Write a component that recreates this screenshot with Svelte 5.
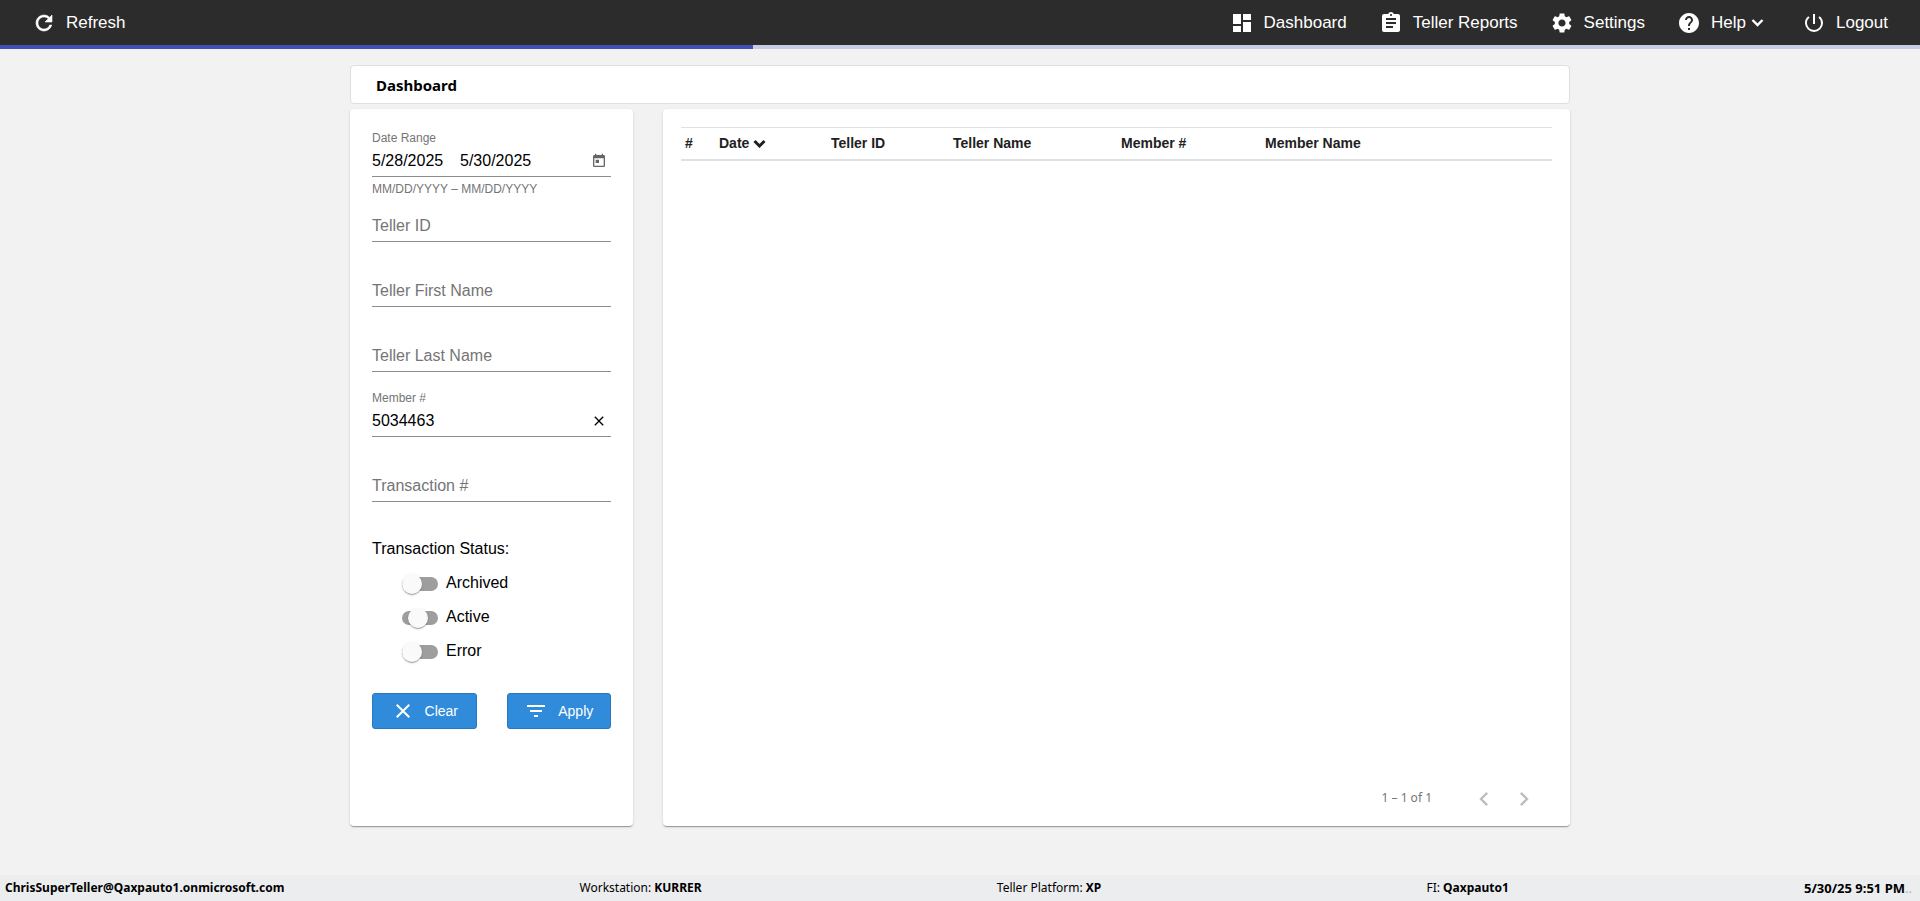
<script lang="ts">
	interface StatusItem {
		label: string;
		checked: boolean;
		indeterminate: boolean;
	}

	// Material icon outlines, drawn on a 24x24 grid
	const icons = {
		refresh:
			'M17.65 6.35A7.958 7.958 0 0 0 12 4c-4.42 0-7.99 3.58-7.99 8s3.57 8 7.99 8c3.73 0 6.84-2.55 7.73-6h-2.08A5.99 5.99 0 0 1 12 18c-3.31 0-6-2.69-6-6s2.69-6 6-6c1.66 0 3.14.69 4.22 1.78L13 11h7V4l-2.35 2.35z',
		dashboard: 'M3 13h8V3H3v10zm0 8h8v-6H3v6zm10 0h8V11h-8v10zm0-18v6h8V3h-8z',
		reports:
			'M19 3h-4.18C14.4 1.84 13.3 1 12 1s-2.4.84-2.82 2H5c-1.1 0-2 .9-2 2v14c0 1.1.9 2 2 2h14c1.1 0 2-.9 2-2V5c0-1.1-.9-2-2-2zm-7 0c.55 0 1 .45 1 1s-.45 1-1 1-1-.45-1-1 .45-1 1-1zm2 14H7v-2h7v2zm3-4H7v-2h10v2zm0-4H7V7h10v2z',
		settings:
			'M19.14 12.94c.04-.3.06-.61.06-.94 0-.32-.02-.64-.07-.94l2.03-1.58c.18-.14.23-.41.12-.61l-1.92-3.32c-.12-.22-.37-.29-.59-.22l-2.39.96c-.5-.38-1.03-.7-1.62-.94l-.36-2.54c-.04-.24-.24-.41-.48-.41h-3.84c-.24 0-.43.17-.47.41l-.36 2.54c-.59.24-1.13.57-1.62.94l-2.39-.96c-.22-.08-.47 0-.59.22L2.74 8.87c-.12.21-.08.47.12.61l2.03 1.58c-.05.3-.09.63-.09.94s.02.64.07.94l-2.03 1.58c-.18.14-.23.41-.12.61l1.92 3.32c.12.22.37.29.59.22l2.39-.96c.5.38 1.03.7 1.62.94l.36 2.54c.05.24.24.41.48.41h3.84c.24 0 .44-.17.47-.41l.36-2.54c.59-.24 1.13-.56 1.62-.94l2.39.96c.22.08.47 0 .59-.22l1.92-3.32c.12-.22.07-.47-.12-.61l-2.01-1.58zM12 15.6c-1.98 0-3.6-1.62-3.6-3.6s1.62-3.6 3.6-3.6 3.6 1.62 3.6 3.6-1.62 3.6-3.6 3.6z',
		help: 'M12 2C6.48 2 2 6.48 2 12s4.48 10 10 10 10-4.48 10-10S17.52 2 12 2zm1 17h-2v-2h2v2zm2.07-7.75l-.9.92C13.45 12.9 13 13.5 13 15h-2v-.5c0-1.1.45-2.1 1.17-2.83l1.24-1.26c.37-.36.59-.86.59-1.41 0-1.1-.9-2-2-2s-2 .9-2 2H8c0-2.21 1.79-4 4-4s4 1.79 4 4c0 .88-.36 1.68-.93 2.25z',
		logout:
			'M13 3h-2v10h2V3zm4.83 2.17l-1.42 1.42A6.92 6.92 0 0 1 19 12c0 3.87-3.13 7-7 7A6.995 6.995 0 0 1 7.58 6.58L6.17 5.17A8.932 8.932 0 0 0 3 12a9 9 0 0 0 18 0c0-2.74-1.23-5.18-3.17-6.83z',
		today:
			'M19 3h-1V1h-2v2H8V1H6v2H5c-1.11 0-1.99.9-1.99 2L3 19c0 1.1.89 2 2 2h14c1.1 0 2-.9 2-2V5c0-1.1-.9-2-2-2zm0 16H5V8h14v11zM7 10h5v5H7z',
		close:
			'M19 6.41L17.59 5 12 10.59 6.41 5 5 6.41 10.59 12 5 17.59 6.41 19 12 13.41 17.59 19 19 17.59 13.41 12z',
		filter: 'M10 18h4v-2h-4v2zM3 6v2h18V6H3zm3 7h12v-2H6v2z',
		left: 'M15.41 7.41L14 6l-6 6 6 6 1.41-1.41L10.83 12z',
		right: 'M10 6L8.59 7.41 13.17 12l-4.58 4.59L10 18l6-6z'
	};

	const columns = ['#', 'Date', 'Teller ID', 'Teller Name', 'Member #', 'Member Name'];

	let startDate = $state('5/28/2025');
	let endDate = $state('5/30/2025');
	let tellerId = $state('');
	let firstName = $state('');
	let lastName = $state('');
	let member = $state('5034463');
	let transaction = $state('');

	let statuses = $state<StatusItem[]>([
		{ label: 'Archived', checked: false, indeterminate: false },
		{ label: 'Active', checked: false, indeterminate: true },
		{ label: 'Error', checked: false, indeterminate: false }
	]);

	function clearFilters() {
		tellerId = '';
		firstName = '';
		lastName = '';
		member = '';
		transaction = '';
	}
</script>

{#snippet icon(name: keyof typeof icons)}
	<svg class="icon {name}" viewBox="0 0 24 24" aria-hidden="true"><path d={icons[name]} /></svg>
{/snippet}

{#snippet caret()}
	<svg class="caret" viewBox="0 0 13 9" aria-hidden="true"><path d="M1.5 2l5 5 5-5" /></svg>
{/snippet}

<div class="app">
	<header class="toolbar">
		<button class="nav-item" type="button">{@render icon('refresh')}Refresh</button>
		<nav class="nav">
			<a class="nav-item" href="#dashboard">{@render icon('dashboard')}Dashboard</a>
			<a class="nav-item" href="#reports">{@render icon('reports')}Teller Reports</a>
			<a class="nav-item" href="#settings">{@render icon('settings')}Settings</a>
			<button class="nav-item" type="button">
				{@render icon('help')}
				<span class="with-caret">Help {@render caret()}</span>
			</button>
			<a class="nav-item" href="#logout">{@render icon('logout')}Logout</a>
		</nav>
	</header>
	<div class="progress"><div class="progress-bar"></div></div>

	<main class="content">
		<h1 class="title">Dashboard</h1>

		<div class="panels">
			<form class="card filters" onsubmit={(e) => e.preventDefault()}>
				<div class="field">
					<label for="start-date">Date Range</label>
					<div class="control">
						<input id="start-date" class="date" bind:value={startDate} />
						<input class="date" aria-label="End date" bind:value={endDate} />
						<button class="suffix calendar" type="button" aria-label="Open calendar">
							{@render icon('today')}
						</button>
					</div>
					<span class="hint">MM/DD/YYYY – MM/DD/YYYY</span>
				</div>
				<div class="field">
					<div class="control">
						<input aria-label="Teller ID" placeholder="Teller ID" bind:value={tellerId} />
					</div>
				</div>
				<div class="field">
					<div class="control">
						<input
							aria-label="Teller First Name"
							placeholder="Teller First Name"
							bind:value={firstName}
						/>
					</div>
				</div>
				<div class="field">
					<div class="control">
						<input
							aria-label="Teller Last Name"
							placeholder="Teller Last Name"
							bind:value={lastName}
						/>
					</div>
				</div>
				<div class="field">
					<label for="member">Member #</label>
					<div class="control">
						<input id="member" bind:value={member} />
						<button
							class="suffix"
							type="button"
							aria-label="Clear member"
							onclick={() => (member = '')}
						>
							{@render icon('close')}
						</button>
					</div>
				</div>
				<div class="field">
					<div class="control">
						<input aria-label="Transaction #" placeholder="Transaction #" bind:value={transaction} />
					</div>
				</div>

				<fieldset class="statuses">
					<legend>Transaction Status:</legend>
					{#each statuses as status (status.label)}
						<label class="toggle">
							<input
								type="checkbox"
								bind:checked={status.checked}
								bind:indeterminate={status.indeterminate}
							/>
							{status.label}
						</label>
					{/each}
				</fieldset>

				<div class="actions">
					<button class="btn" type="button" onclick={clearFilters}>
						{@render icon('close')}Clear
					</button>
					<button class="btn" type="submit">{@render icon('filter')}Apply</button>
				</div>
			</form>

			<section class="card results">
				<table>
					<colgroup>
						<col class="c-num" />
						<col class="c-date" />
						<col class="c-id" />
						<col class="c-name" />
						<col class="c-member" />
						<col />
					</colgroup>
					<thead>
						<tr>
							{#each columns as column}
								<th scope="col">
									{column}
									{#if column === 'Date'}{@render caret()}{/if}
								</th>
							{/each}
						</tr>
					</thead>
				</table>
				<div class="paginator">
					<span>1 – 1 of 1</span>
					<div class="pages">
						<button type="button" disabled aria-label="Previous page">{@render icon('left')}</button>
						<button type="button" disabled aria-label="Next page">{@render icon('right')}</button>
					</div>
				</div>
			</section>
		</div>
	</main>

	<footer class="status-bar">
		<span><b>ChrisSuperTeller@Qaxpauto1.onmicrosoft.com</b></span>
		<span>Workstation: <b>KURRER</b></span>
		<span>Teller Platform: <b>XP</b></span>
		<span class="institution">FI: <b>Qaxpauto1</b></span>
		<span class="clock"><b>5/30/25 9:51 PM</b><span class="dots">..</span></span>
	</footer>
</div>

<style>
	:global(body) {
		margin: 0;
		background: #f2f2f2;
	}

	.app {
		display: flex;
		flex-direction: column;
		min-height: 100vh;
		font-family: 'Liberation Sans', Arial, sans-serif;
		font-size: 16px;
		color: #000;
	}

	.app :where(button, input) {
		font: inherit;
		color: inherit;
		margin: 0;
		padding: 0;
		border: 0;
		background: none;
	}

	.icon {
		width: 24px;
		height: 24px;
		flex: none;
		fill: currentColor;
	}

	.refresh {
		stroke: currentColor;
		stroke-width: 0.6;
	}

	.caret {
		width: 13px;
		height: 9px;
		fill: none;
		stroke: currentColor;
		stroke-width: 2.4;
	}

	/* Top toolbar */
	.toolbar {
		display: flex;
		justify-content: space-between;
		height: 45px;
		padding: 0 32px;
		background: #2c2c2c;
		color: #fff;
		font-size: 17px;
	}

	.nav {
		display: flex;
		gap: 32px;
	}

	.app .nav-item {
		display: flex;
		align-items: center;
		gap: 10px;
		color: #fff;
		text-decoration: none;
		white-space: nowrap;
	}

	.with-caret {
		display: flex;
		align-items: center;
		gap: 5px;
		padding-right: 6px;
	}

	.progress {
		height: 4px;
		background: #c7cbe6;
	}

	.progress-bar {
		width: 39.2%;
		height: 100%;
		background: #3f51b5;
	}

	/* Page body */
	.content {
		display: flex;
		flex-direction: column;
		flex: 1;
		gap: 5px;
		box-sizing: border-box;
		width: 100%;
		max-width: 1220px;
		margin: 0 auto;
		padding: 16px 0 49px;
	}

	.title {
		margin: 0;
		padding: 1px 25px 0;
		border: 1px solid #dedfe0;
		border-radius: 4px;
		background: #fff;
		font: 700 15px/36px 'Noto Sans', sans-serif;
	}

	.panels {
		display: grid;
		grid-template-columns: 283px 1fr;
		gap: 30px;
		flex: 1;
	}

	.card {
		box-sizing: border-box;
		border-radius: 4px;
		background: #fff;
		box-shadow:
			0 2px 1px -1px rgba(0, 0, 0, 0.2),
			0 1px 1px rgba(0, 0, 0, 0.14),
			0 1px 3px rgba(0, 0, 0, 0.12);
	}

	/* Filter form */
	.filters {
		padding: 19px 22px;
	}

	.field {
		display: flex;
		flex-direction: column;
		justify-content: flex-end;
		position: relative;
		height: 49px;
		margin-bottom: 16px;
	}

	.field label,
	.hint {
		font-size: 12px;
		line-height: 14px;
		color: #757575;
	}

	/* Helper text hangs in the space below the underline */
	.hint {
		position: absolute;
		top: 54px;
		left: 0;
	}

	.control {
		display: flex;
		align-items: center;
		height: 31px;
		border-bottom: 1px solid #8c8c8c;
	}

	.control input {
		flex: 1;
		min-width: 0;
		outline: none;
	}

	.control .date {
		flex: 0 0 88px;
	}

	.control input::placeholder {
		color: #757575;
		opacity: 1;
	}

	.suffix {
		display: flex;
		justify-content: center;
		width: 24px;
		margin-left: auto;
	}

	.suffix .icon {
		width: 16px;
		height: 16px;
	}

	.app .calendar {
		color: #666;
	}

	.statuses {
		display: flex;
		flex-direction: column;
		gap: 10px;
		margin: 35px 0 0;
		padding: 0 0 0 30px;
		border: 0;
	}

	.statuses legend {
		margin: 0 0 10px -30px;
		padding: 0;
		line-height: 24px;
	}

	.toggle {
		display: flex;
		align-items: center;
		gap: 8px;
		line-height: 24px;
	}

	.app .toggle input {
		appearance: none;
		display: flex;
		align-items: center;
		width: 36px;
		height: 14px;
		margin-top: 2px;
		border-radius: 7px;
		background: #9e9e9e;
	}

	.toggle input::before {
		content: '';
		width: 20px;
		height: 20px;
		flex: none;
		border-radius: 50%;
		background: #fafafa;
		box-shadow:
			0 2px 1px -1px rgba(0, 0, 0, 0.2),
			0 1px 1px rgba(0, 0, 0, 0.14),
			0 1px 3px rgba(0, 0, 0, 0.12);
	}

	.toggle input:indeterminate::before {
		margin-left: 6px;
	}

	.toggle input:checked::before {
		margin-left: 16px;
	}

	.actions {
		display: grid;
		grid-template-columns: 1fr 1fr;
		gap: 30px;
		margin-top: 30px;
	}

	.app .btn {
		display: flex;
		align-items: center;
		justify-content: center;
		gap: 10px;
		height: 36px;
		border: 1px solid #2779c0;
		border-radius: 3px;
		background: #308cdb;
		color: #fff;
		font-size: 14px;
	}

	/* Results */
	.results {
		display: flex;
		flex-direction: column;
		justify-content: space-between;
		padding: 18px 18px 13px;
	}

	table {
		width: 100%;
		border-collapse: collapse;
		table-layout: fixed;
	}

	th {
		height: 29px;
		padding: 0 4px 2px;
		border-top: 1px solid #dee2e6;
		border-bottom: 2px solid #dee2e6;
		color: #212121;
		font-size: 14px;
		text-align: left;
		white-space: nowrap;
	}

	th .caret {
		stroke-width: 3;
	}

	.c-num {
		width: 34px;
	}

	.c-date {
		width: 112px;
	}

	.c-id {
		width: 122px;
	}

	.c-name {
		width: 168px;
	}

	.c-member {
		width: 144px;
	}

	.paginator {
		display: flex;
		align-items: center;
		justify-content: flex-end;
		gap: 32px;
		padding-right: 8px;
		color: #757575;
		font: 12px 'Noto Sans', sans-serif;
	}

	.pages {
		display: flex;
		padding-top: 4px;
	}

	.pages .icon {
		width: 28px;
		height: 28px;
	}

	.app .pages button {
		display: flex;
		justify-content: center;
		width: 40px;
		color: #bdbdbd;
	}

	/* Bottom status bar */
	.status-bar {
		display: flex;
		justify-content: space-between;
		padding: 0 8px 0 5px;
		background: #ecedef;
		font: 12px/26px 'Noto Sans', sans-serif;
		white-space: nowrap;
	}

	.institution {
		padding-left: 30px;
	}

	.clock {
		font-size: 13px;
	}

	.dots {
		color: #b0b0b0;
	}
</style>
